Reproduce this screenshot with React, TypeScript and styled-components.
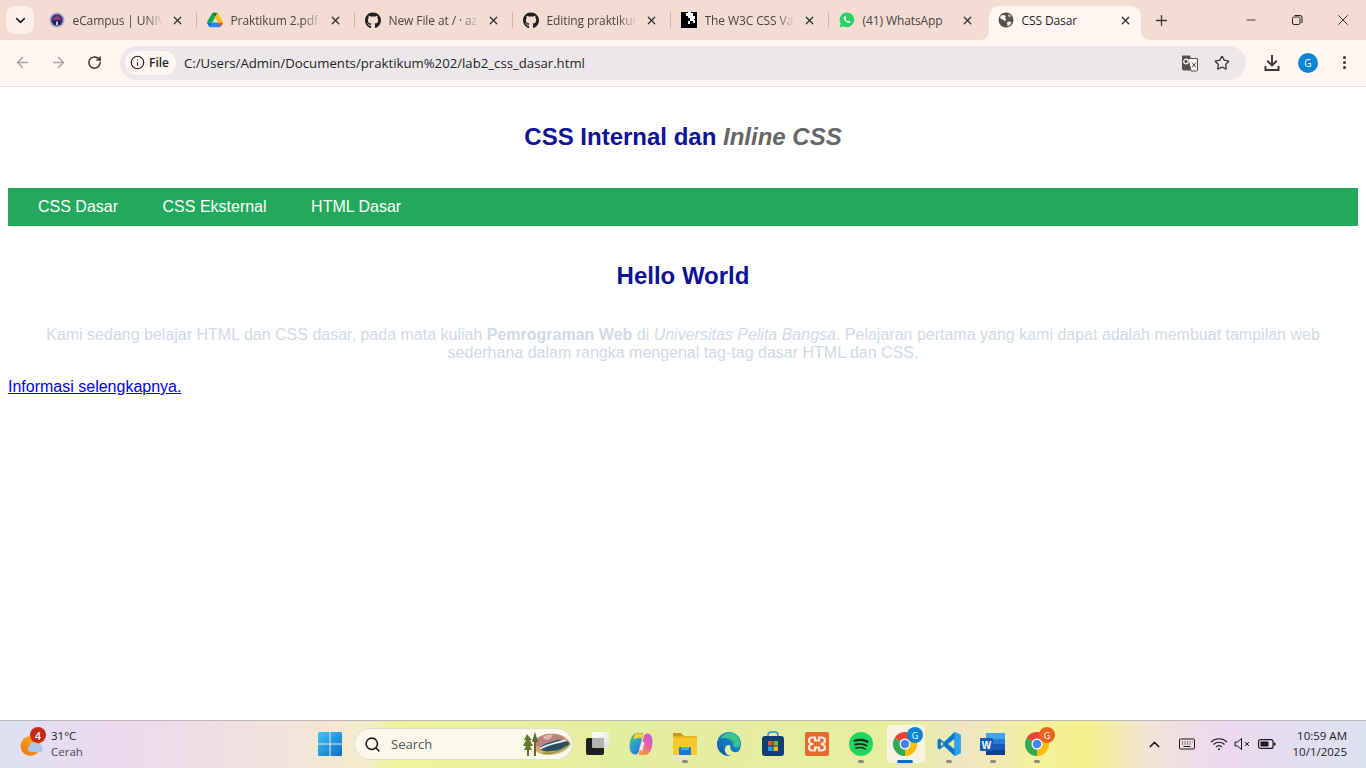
import React, { FC, ReactNode } from 'react';
import styled, { createGlobalStyle } from 'styled-components';
import { ArrowLeft, ArrowRight, RotateCw, Info, Star, EllipsisVertical, ChevronDown, ChevronUp, X, Plus, Minus, Search } from 'lucide-react';
import { FaGithub } from 'react-icons/fa';

const GlobalStyle = createGlobalStyle`
  html, body {
    margin: 0;
    padding: 0;
    width: 1366px;
    height: 768px;
    overflow: hidden;
    background: #fff;
  }
`;

const Screen = styled.div`
  width: 1366px;
  height: 768px;
  display: flex;
  flex-direction: column;
  font-family: 'Open Sans', 'Liberation Sans', sans-serif;
`;

/* browser tabs */
const TabStrip = styled.div`
  height: 40px;
  flex: none;
  display: flex;
  align-items: flex-start;
  background: #f3dcd2;
  padding-left: 6px;
  box-sizing: border-box;
`;

const TabListButton = styled.div`
  width: 28px;
  height: 28px;
  margin-top: 6px;
  margin-right: 5px;
  border-radius: 9px;
  background: #fdf0ea;
  color: #1f1f1f;
  display: flex;
  align-items: center;
  justify-content: center;
`;

const TabItem = styled.div<{ $active?: boolean }>`
  width: ${(p) => (p.$active ? '152px' : '158px')};
  height: ${(p) => (p.$active ? '34px' : '28px')};
  margin-top: 6px;
  margin-left: ${(p) => (p.$active ? '2px' : '0')};
  flex: none;
  box-sizing: border-box;
  padding: ${(p) => (p.$active ? '0 8px 6px 9px' : '0 12px 0 10px')};
  display: flex;
  align-items: center;
  position: relative;
  background: ${(p) => (p.$active ? '#fff6f2' : 'transparent')};
  border-radius: ${(p) => (p.$active ? '10px 10px 0 0' : '0')};
  color: ${(p) => (p.$active ? '#1f1f1f' : '#4a4441')};
`;

const TabFlare = styled.span<{ $side: 'left' | 'right' }>`
  position: absolute;
  bottom: 0;
  ${(p) => p.$side}: -8px;
  width: 8px;
  height: 8px;
  background: radial-gradient(
    circle at ${(p) => (p.$side === 'left' ? '0 0' : '100% 0')},
    transparent 7.5px,
    #fff6f2 8px
  );
`;

const TabDivider = styled.span`
  position: absolute;
  right: 0;
  top: 6px;
  width: 1px;
  height: 16px;
  background: #cdb8ae;
`;

const TabIcon = styled.span`
  width: 16px;
  height: 16px;
  flex: none;
  display: flex;
  align-items: center;
  justify-content: center;
  color: #1f1f1f;
`;

const TabTitle = styled.span<{ $fade?: boolean }>`
  flex: 1;
  min-width: 0;
  margin-left: 7.5px;
  font-size: 12px;
  letter-spacing: -0.1px;
  white-space: nowrap;
  -webkit-mask-image: ${(p) => (p.$fade ? 'linear-gradient(90deg, #000 72px, transparent 90px)' : 'none')};
`;

const TabClose = styled.span`
  width: 16px;
  height: 16px;
  flex: none;
  margin-left: 4px;
  display: flex;
  align-items: center;
  justify-content: center;
  color: #2b2b2b;
`;

const NewTab = styled.div`
  width: 20px;
  height: 28px;
  margin-top: 6px;
  margin-left: 10px;
  display: flex;
  align-items: center;
  justify-content: center;
  color: #3c3835;
`;

const WindowControls = styled.div`
  margin-left: auto;
  display: flex;
  height: 40px;
  align-items: center;
`;

const WindowButton = styled.div`
  width: 46px;
  height: 40px;
  display: flex;
  align-items: center;
  justify-content: center;
  color: #1f1f1f;
`;

/* toolbar */
const Toolbar = styled.div`
  height: 47px;
  flex: none;
  box-sizing: border-box;
  display: flex;
  align-items: center;
  background: #fff6f2;
  border-bottom: 1px solid #e6e0dd;
  padding-left: 4px;
  padding-bottom: 1px;
`;

const NavButton = styled.div<{ $dim?: boolean }>`
  width: 36px;
  height: 34px;
  display: flex;
  align-items: center;
  justify-content: center;
  color: ${(p) => (p.$dim ? '#a8a29f' : '#3c3836')};
`;

const Omnibox = styled.div`
  width: 1126px;
  height: 34px;
  margin-left: 8px;
  margin-right: 8px;
  border-radius: 17px;
  background: #ece7ea;
  display: flex;
  align-items: center;
  padding: 0 8px 0 5px;
  box-sizing: border-box;
`;

const SiteChip = styled.div`
  height: 24px;
  width: 51px;
  flex: none;
  border-radius: 12px;
  background: #fff6f2;
  display: flex;
  align-items: center;
  gap: 4px;
  padding-left: 5px;
  box-sizing: border-box;
  font-size: 12px;
  font-weight: 600;
  color: #1f1f1f;
`;

const UrlText = styled.div`
  margin-left: 8px;
  flex: 1;
  font-size: 13.2px;
  color: #1f1f1f;
`;

const OmniAction = styled.div`
  width: 32px;
  height: 32px;
  display: flex;
  align-items: center;
  justify-content: center;
  color: #3c3836;
`;

const Avatar = styled.div`
  width: 20px;
  height: 20px;
  border-radius: 50%;
  background: #0a85d1;
  color: #fff;
  font-size: 10px;
  display: flex;
  align-items: center;
  justify-content: center;
`;

/* page content */
const Viewport = styled.main`
  flex: 1;
  min-height: 0;
  background: #fff;
  box-sizing: border-box;
  padding: 0 8px;
  font-family: 'Liberation Sans', Arial, sans-serif;
  font-size: 16px;
`;

const PageTitle = styled.h1`
  margin: 0;
  padding: 36px 0 37px;
  text-align: center;
  font-size: 24px;
  line-height: 28px;
  font-weight: 700;
  color: #0e1296;
`;

const InlineNote = styled.i`
  color: #666;
`;

const NavBar = styled.nav`
  height: 38px;
  background: #23a95c;
  display: flex;
  align-items: center;
  gap: 44.5px;
  padding-left: 30px;
`;

const NavLink = styled.a`
  color: #fff;
  font-size: 16px;
  white-space: nowrap;
`;

const Heading = styled.h2`
  margin: 0;
  padding: 36px 0 36px;
  text-align: center;
  font-size: 24px;
  line-height: 28px;
  font-weight: 700;
  color: #0e1296;
`;

const Lead = styled.p`
  margin: 0;
  text-align: center;
  color: #d0dae6;
  font-size: 16px;
  line-height: 18px;
  padding: 0 30px;
`;

const MoreLink = styled.a`
  display: block;
  margin-top: 16px;
  width: max-content;
  color: #0000ee;
  text-decoration: underline;
  line-height: 18px;
`;

/* taskbar */
const Taskbar = styled.footer`
  height: 48px;
  flex: none;
  box-sizing: border-box;
  border-top: 1px solid #b9b7b5;
  padding-bottom: 1px;
  display: flex;
  align-items: center;
  background: linear-gradient(
    90deg,
    #dce2f2 0,
    #ecd9ef 110px,
    #f3e2dc 280px,
    #f4eccb 365px,
    #eff39c 395px,
    #e4eea0 620px,
    #e7eea0 900px,
    #efe6c2 965px,
    #f3f19a 1040px,
    #f5f08c 1085px,
    #f3e3d8 1150px,
    #ecd9ef 1225px,
    #dbe2f2 1366px
  );
`;

const WeatherArea = styled.div`
  width: 318px;
  flex: none;
  display: flex;
  align-items: center;
  padding-left: 20px;
  box-sizing: border-box;
`;

const WeatherIcon = styled.div`
  width: 26px;
  height: 34px;
  position: relative;
  flex: none;
`;

const WeatherBadge = styled.span`
  position: absolute;
  top: 0;
  left: 10px;
  width: 16px;
  height: 16px;
  border-radius: 50%;
  background: #c4291c;
  color: #fff;
  font-size: 11px;
  font-weight: 600;
  display: flex;
  align-items: center;
  justify-content: center;
`;

const WeatherText = styled.div`
  margin-left: 5px;
  font-size: 11.5px;
  line-height: 16px;
  color: #1f1f1f;
`;

const WeatherSub = styled.div`
  color: #4a4a4a;
`;

const StartSlot = styled.div`
  width: 22px;
  height: 24px;
  flex: none;
`;

const SearchBox = styled.div`
  width: 219px;
  height: 32px;
  flex: none;
  margin-left: 14px;
  box-sizing: border-box;
  border: 1px solid #dfe0c8;
  border-radius: 16px;
  background: #fbf9ec;
  display: flex;
  align-items: center;
  padding-left: 9px;
  position: relative;
  color: #1b1b1b;
`;

const SearchLabel = styled.span`
  margin-left: 10px;
  font-size: 13px;
  color: #555;
`;

const SearchArt = styled.span`
  position: absolute;
  right: 1px;
  top: 2px;
  width: 50px;
  height: 26px;
`;

const AppIcons = styled.div`
  display: flex;
  align-items: center;
  margin-left: 2px;
`;

const AppSlot = styled.div<{ $active?: boolean }>`
  width: 44px;
  height: 40px;
  flex: none;
  position: relative;
  display: flex;
  align-items: center;
  justify-content: center;
  &::before {
    content: '';
    position: absolute;
    left: 4px;
    right: 2px;
    top: 1px;
    bottom: 1px;
    border-radius: 4px;
    background: ${(p) => (p.$active ? '#f8f3e0' : 'transparent')};
  }
  & > * {
    position: relative;
  }
`;

const RunDot = styled.span<{ $active?: boolean }>`
  position: absolute !important;
  bottom: 1px;
  left: 50%;
  transform: translateX(-50%);
  width: ${(p) => (p.$active ? '16px' : '6px')};
  height: 3px;
  border-radius: 2px;
  background: ${(p) => (p.$active ? '#0a6fc4' : '#8a8a80')};
`;

const AppBadge = styled.span<{ $color: string }>`
  position: absolute !important;
  top: 3px;
  right: 4px;
  width: 16px;
  height: 16px;
  border-radius: 50%;
  background: ${(p) => p.$color};
  color: #fff;
  font-size: 9px;
  display: flex;
  align-items: center;
  justify-content: center;
`;

const Tray = styled.div`
  margin-left: auto;
  display: flex;
  align-items: center;
  padding-right: 19px;
  color: #1b1b1b;
`;

const TrayItem = styled.span<{ $w: number }>`
  width: ${(p) => p.$w}px;
  display: flex;
  align-items: center;
  justify-content: center;
`;

const Clock = styled.div`
  margin-left: 14px;
  font-size: 11.5px;
  line-height: 16px;
  text-align: right;
  color: #1b1b1b;
`;

/* drawn icons */
const CampusIcon = () => (
  <svg width="16" height="16" viewBox="0 0 16 16">
    <circle cx="8" cy="8" r="7.5" fill="#a9a6cc" />
    <circle cx="8" cy="8" r="5.8" fill="#2d2a80" />
    <path d="M3.5 7 8 3 12.5 7v1.5h-9z" fill="#8a3a68" />
    <rect x="4.5" y="8.5" width="7" height="4.5" fill="#1b1b55" />
    <rect x="7" y="9.5" width="2" height="3.5" fill="#c9c6e0" />
  </svg>
);

const DriveIcon = () => (
  <svg width="16" height="16" viewBox="0 0 87.3 78">
    <path d="m6.6 66.85 3.85 6.65c.8 1.4 1.95 2.5 3.3 3.3L27.5 53H0c0 1.55.4 3.1 1.2 4.5z" fill="#0066da" />
    <path d="M43.65 25 29.9 1.2c-1.35.8-2.5 1.9-3.3 3.3L1.2 48.5C.4 49.9 0 51.45 0 53h27.5z" fill="#00ac47" />
    <path d="M73.55 76.8c1.35-.8 2.5-1.9 3.3-3.3l1.6-2.75L86.1 57.5c.8-1.4 1.2-2.95 1.2-4.5H59.8l5.85 11.5z" fill="#ea4335" />
    <path d="M43.65 25 57.4 1.2C56.05.4 54.5 0 52.9 0H34.4c-1.6 0-3.15.45-4.5 1.2z" fill="#00832d" />
    <path d="M59.8 53H27.5L13.75 76.8c1.35.8 2.9 1.2 4.5 1.2h50.8c1.6 0 3.15-.45 4.5-1.2z" fill="#2684fc" />
    <path d="M73.4 26.5 60.7 4.5c-.8-1.4-1.95-2.5-3.3-3.3L43.65 25 59.8 53h27.45c0-1.55-.4-3.1-1.2-4.5z" fill="#ffba00" />
  </svg>
);

const ValidatorIcon = () => (
  <svg width="16" height="16" viewBox="0 0 16 16">
    <rect width="16" height="16" fill="#000" />
    <path d="M5 1h2V0h3v1h2v3h2v3h-1v1h1v3h-2V9H9v3H7V9h2V6H7V4H5z" fill="#fff" />
  </svg>
);

const GlobeIcon = () => (
  <svg width="16" height="16" viewBox="0 0 16 16">
    <circle cx="8" cy="8" r="7.5" fill="#55514f" />
    <path d="M3 3.5 6 3l2 1-1 2 1.5 1.5L7 9 4.5 7.5 2 6zM9 10l3-.5 1.5 1-2 3-2 .5zM10 2l3 2-2 1z" fill="#fff6f2" />
  </svg>
);

const WhatsAppIcon = () => (
  <svg width="16" height="16" viewBox="0 0 16 16">
    <path d="M8 .5a7.3 7.3 0 0 0-6.3 11L.6 15.400l4-1.100A7.3 7.3 0 1 0 8 .5z" fill="#25d366" />
    <path d="M5.5 4.200c-.5.3-1 1-.8 2 .3 1.700 2.800 4.500 5 4.800 1 .1 1.800-.5 2-1.200L10 8.700l-.9.8c-1-.3-2-1.500-2.500-2.500l.7-.9-.9-1.900z" fill="#fff" />
  </svg>
);

const RestoreIcon = () => (
  <svg width="12" height="12" viewBox="0 0 12 12" fill="none" stroke="currentColor">
    <rect x="1.5" y="3" width="7.5" height="7.5" rx="1.5" />
    <path d="M3.5 1.5h5.5a2 2 0 0 1 2 2v5.5" />
  </svg>
);

const TranslateIcon = () => (
  <svg width="18" height="18" viewBox="0 0 18 18">
    <path d="M1 1.5h8l1 3h-1l3 12H3a2 2 0 0 1-2-2z" fill="#55514f" />
    <path d="M7 4.5h9.500v11.500a1 1 0 0 1-1 1H10z" fill="#fff6f2" stroke="#55514f" />
    <circle cx="5" cy="7.5" r="2.3" fill="none" stroke="#fff" strokeWidth="1.2" />
    <path d="m11 8.5 4 5M15 8.5l-4 5" stroke="#55514f" />
  </svg>
);

const DownloadIcon = () => (
  <svg width="18" height="18" viewBox="0 0 18 18" fill="currentColor">
    <path d="M8 1h2v8l3-3 1.400 1.400L9 12.800 3.600 7.400 5 6l3 3z" />
    <path d="M1.500 12h2v3h11v-3h2v5h-15z" />
  </svg>
);

const WeatherArt = () => (
  <svg width="26" height="34" viewBox="0 0 26 34">
    <defs>
      <linearGradient id="sun" x1="0" y1="1" x2="1" y2="0">
        <stop offset="0" stopColor="#ea6f16" />
        <stop offset="1" stopColor="#fbb81f" />
      </linearGradient>
    </defs>
    <circle cx="10.5" cy="19" r="10" fill="url(#sun)" />
    <path d="M11 25a3 3 0 0 1-1.500-5.700 4.500 4.500 0 0 1 8.500-1.500 3.700 3.700 0 0 1 2 7.200z" fill="#a9c6ec" />
  </svg>
);

const WindowsLogo = () => (
  <svg width="24" height="24" viewBox="0 0 24 24">
    <defs>
      <linearGradient id="win" x1="0" y1="0" x2="1" y2="1">
        <stop offset="0" stopColor="#3ec6f3" />
        <stop offset="1" stopColor="#0a6cc9" />
      </linearGradient>
    </defs>
    <path d="M0 1.5A1.500 1.500 0 0 1 1.500 0h10v11.500H0zM12.500 0h10A1.500 1.500 0 0 1 24 1.500v10H12.500zM0 12.500h11.500V24h-10A1.500 1.500 0 0 1 0 22.500zM12.500 12.500H24v10a1.500 1.500 0 0 1-1.500 1.500h-10z" fill="url(#win)" />
  </svg>
);

const LandscapeArt = () => (
  <svg width="50" height="26" viewBox="0 0 50 26">
    <path d="M14 8c6-4 14-6 22-5 6 1 12 5 14 10-4 7-13 11-22 11-6 0-12-2-14-5z" fill="#d5b06c" />
    <path d="M14 10c5-6 12-8 18-7 7 0 13 4 17 9-6 1-12 3-18 4-6 0-12 0-17-1z" fill="#b9817f" />
    <path d="M22 6c3-2 7-3 10-2l-3 4-5 1z" fill="#e0b5b0" />
    <path d="M18 18c5-6 12-7 18-9 5-1 10 1 13 4-5 4-12 7-18 7-5 1-9 0-13-2z" fill="#2c4f5c" />
    <path d="M19 18c7-5 14-5 26-9" stroke="#e6eef0" strokeWidth="2" fill="none" />
    <path d="M22 22c8 1 17-2 24-7" stroke="#7d9a44" strokeWidth="1.500" fill="none" />
    <path d="M6 3 3 9h2l-3 6h3l-2 4h3v6h2v-6h3l-2-4h3L9 9h2z" fill="#5f7d2c" />
    <rect x="13" y="4" width="2" height="21" fill="#7a5a34" />
    <path d="M14 1 11 11h6z" fill="#4e6e28" />
  </svg>
);

const TaskViewIcon = () => (
  <svg width="24" height="24" viewBox="0 0 24 24">
    <defs>
      <linearGradient id="tv" x1="0" y1="0" x2="1" y2="1">
        <stop offset="0" stopColor="#ffffff" />
        <stop offset="1" stopColor="#e2e2da" />
      </linearGradient>
    </defs>
    <rect x="7" y="0" width="17" height="16" rx="2" fill="url(#tv)" />
    <rect x="1" y="6" width="18" height="17" rx="2" fill="#1f1f1f" />
    <rect x="7" y="6" width="12" height="10" rx="1" fill="#b4b4ae" />
  </svg>
);

const CopilotIcon = () => (
  <svg width="24" height="24" viewBox="0 0 24 24">
    <defs>
      <linearGradient id="copL" x1="0" y1="0" x2=".6" y2="1">
        <stop offset="0" stopColor="#6dc04a" />
        <stop offset=".5" stopColor="#2aa8c8" />
        <stop offset="1" stopColor="#2f6fe0" />
      </linearGradient>
      <linearGradient id="copR" x1="1" y1="0" x2=".4" y2="1">
        <stop offset="0" stopColor="#b45ae0" />
        <stop offset=".55" stopColor="#ea5fa8" />
        <stop offset="1" stopColor="#f59a3c" />
      </linearGradient>
    </defs>
    <path d="M8 1h5c1 0 1.500 1 1 2L9.500 20c-.5 1.600-1.500 2.500-3 2.500C3 22.500.5 19 .5 14.500.5 7.500 3.500 1 8 1z" fill="url(#copL)" />
    <path d="M16 23h-5c-1 0-1.500-1-1-2l5-17c.5-1.600 1.500-2.500 3-2.500 3.500 0 5.500 3.500 5.500 8 0 7-3 13.500-7.500 13.500z" fill="url(#copR)" />
    <path d="M7 1.500h6c.8 0 1.200.8 1 1.500l-1 3.500C10 5.500 6.500 6 5 8 4.500 5 5.500 2.500 7 1.500z" fill="#f2d23a" />
    <path d="M13 9.500 10.500 18l3 .5 2-8z" fill="#f3e6f6" />
  </svg>
);

const FolderIcon = () => (
  <svg width="26" height="24" viewBox="0 0 26 24">
    <path d="M1 2a1 1 0 0 1 1-1h7l3 3h-11z" fill="#c99a1e" />
    <path d="M1 5h24v18H1z" fill="#f8c92f" />
    <path d="M1 4h24v2H1z" fill="#e9b324" />
    <rect x="7" y="15" width="12" height="8" rx="1" fill="#1b78c9" />
    <rect x="9" y="15" width="8" height="3" fill="#49a7e8" />
  </svg>
);

const EdgeIcon = () => (
  <svg width="24" height="24" viewBox="0 0 24 24">
    <defs>
      <linearGradient id="edge" x1="0" y1="1" x2="1" y2="0">
        <stop offset="0" stopColor="#0c59a4" />
        <stop offset="1" stopColor="#1b9de2" />
      </linearGradient>
    </defs>
    <circle cx="12" cy="12" r="12" fill="url(#edge)" />
    <path d="M3 7a10.500 10.500 0 0 1 20 5c0 3-3 4-5 3-3 0-1-3-2-5-2-4-10-5-13-3z" fill="#3cc58a" />
    <path d="M15 24c-5 0-8-4-7-8 .5-2 2-3 4-3 3 0-1 5 5 7 2 .5 4 0 5-1-2 3-4 5-7 5z" fill="#e4eea0" />
  </svg>
);

const StoreIcon = () => (
  <svg width="24" height="26" viewBox="0 0 24 26">
    <path d="M7 6V4a3 3 0 0 1 3-3h4a3 3 0 0 1 3 3v2" fill="none" stroke="#2a8fd0" strokeWidth="1.500" />
    <rect x="1" y="5" width="22" height="20" rx="3" fill="#123f73" />
    <rect x="7" y="10" width="4.500" height="4.500" fill="#e8542e" />
    <rect x="12.500" y="10" width="4.500" height="4.500" fill="#7ab82d" />
    <rect x="7" y="15.500" width="4.500" height="4.500" fill="#1ea0e6" />
    <rect x="12.500" y="15.500" width="4.500" height="4.500" fill="#f6b818" />
  </svg>
);

const XamppIcon = () => (
  <svg width="24" height="24" viewBox="0 0 24 24">
    <rect width="24" height="24" rx="2" fill="#e8692c" />
    <path d="M10 5.500H7a3 3 0 0 0-1.500 5.600L7 12l-1.500.9A3 3 0 0 0 7 18.500h3v-3h4v3h3a3 3 0 0 0 1.500-5.600L17 12l1.500-.9A3 3 0 0 0 17 5.500h-3v3h-4z" fill="none" stroke="#fbe9dd" strokeWidth="2.200" />
  </svg>
);

const SpotifyIcon = () => (
  <svg width="24" height="24" viewBox="0 0 24 24" fill="none" stroke="#14291a" strokeLinecap="round">
    <circle cx="12" cy="12" r="12" fill="#1ed760" stroke="none" />
    <path d="M5.500 8.800c4.500-1.300 9.500-1 13 1" strokeWidth="2.200" />
    <path d="M6.200 12.500c3.800-1 8-.7 11.300 1" strokeWidth="1.900" />
    <path d="M7 16c3.200-.8 6.500-.5 9.200.9" strokeWidth="1.600" />
  </svg>
);

const ChromeIcon = () => (
  <svg width="24" height="24" viewBox="0 0 24 24">
    <path d="M12 12 22.400 6A12 12 0 0 0 1.600 6z" fill="#ea4335" />
    <path d="M12 12 1.600 6A12 12 0 0 0 12 24z" fill="#34a853" />
    <path d="M12 12 12 24A12 12 0 0 0 22.400 6z" fill="#fbbc05" />
    <circle cx="12" cy="12" r="5.500" fill="#fff" />
    <circle cx="12" cy="12" r="4.300" fill="#4285f4" />
  </svg>
);

const VsCodeIcon = () => (
  <svg width="24" height="24" viewBox="0 0 24 24">
    <path d="M17.500 0 23.500 2.800v18.400L17.500 24 7 14l-4.500 3.500L.5 16v-8L2.500 6.500 7 10z" fill="#0f76c4" />
    <path d="M17.500 6.800 11 12l6.500 5.200z" fill="#e4eea0" />
    <path d="M17.500 0 23.500 2.800v18.400L17.500 24z" fill="#2aa3ee" />
    <path d="M4 9.500 6.500 12 4 14.500z" fill="#e4eea0" />
  </svg>
);

const WordIcon = () => (
  <svg width="26" height="24" viewBox="0 0 26 24">
    <rect x="6" y="1" width="19" height="22" rx="1" fill="#2b7cd3" />
    <rect x="6" y="1" width="19" height="6" fill="#41a5ee" />
    <rect x="6" y="12" width="19" height="6" fill="#185abd" />
    <rect x="6" y="18" width="19" height="5" fill="#103f91" />
    <rect x="0" y="6" width="13" height="13" rx="1" fill="#1a5bb8" />
    <text x="6.500" y="16.500" fontSize="10" fontWeight="700" fill="#fff" textAnchor="middle" fontFamily="Liberation Sans">W</text>
  </svg>
);

const KeyboardIcon = () => (
  <svg width="16" height="12" viewBox="0 0 16 12" fill="none" stroke="currentColor">
    <rect x=".5" y="1" width="15" height="10" rx="1" />
    <path d="M3 4h1M5.500 4h1M8 4h1M10.500 4h1M13 4h.5M3 6h1M5.500 6h1M8 6h1M10.500 6h1M4.500 8.500h7" />
  </svg>
);

const WifiIcon = () => (
  <svg width="18" height="14" viewBox="0 0 18 14" fill="none" stroke="currentColor" strokeWidth="1.100">
    <path d="M1 5a11.500 11.500 0 0 1 16 0M3.500 7.500a8 8 0 0 1 11 0M6 10a4.500 4.500 0 0 1 6 0" />
    <circle cx="9" cy="12.300" r="1" fill="currentColor" stroke="none" />
  </svg>
);

const MuteIcon = () => (
  <svg width="18" height="14" viewBox="0 0 18 14" fill="none" stroke="currentColor">
    <path d="M1 5h2.500L7.500 1.500v11L3.500 9H1z" />
    <path d="m11 5 4 4M15 5l-4 4" />
  </svg>
);

const BatteryIcon = () => (
  <svg width="18" height="12" viewBox="0 0 18 12">
    <rect x=".6" y="1.600" width="14.400" height="8.800" rx="2" fill="none" stroke="currentColor" strokeWidth="1.200" />
    <rect x="2.500" y="3.500" width="8" height="5" rx=".8" fill="currentColor" />
    <rect x="15.800" y="4.500" width="1.700" height="3" rx=".6" fill="currentColor" />
  </svg>
);

interface TabData {
  title: string;
  icon: ReactNode;
  fade?: boolean;
}

const tabs: TabData[] = [
  { title: 'eCampus | UNIV', icon: <CampusIcon />, fade: true },
  { title: 'Praktikum 2.pdf', icon: <DriveIcon />, fade: true },
  { title: 'New File at / · az', icon: <FaGithub size={17} />, fade: true },
  { title: 'Editing praktikur', icon: <FaGithub size={17} />, fade: true },
  { title: 'The W3C CSS Va', icon: <ValidatorIcon />, fade: true },
  { title: '(41) WhatsApp', icon: <WhatsAppIcon /> },
];

const Tab: FC<TabData & { active?: boolean; divider?: boolean }> = ({ title, icon, fade, active, divider }) => (
  <TabItem $active={active}>
    <TabIcon>{icon}</TabIcon>
    <TabTitle $fade={fade}>{title}</TabTitle>
    <TabClose>
      <X size={13} strokeWidth={2.2} />
    </TabClose>
    {divider && <TabDivider />}
    {active && <TabFlare $side="left" />}
    {active && <TabFlare $side="right" />}
  </TabItem>
);

const App: FC = () => {
  return (
    <Screen>
      <GlobalStyle />
      <TabStrip>
        <TabListButton>
          <ChevronDown size={15} strokeWidth={2.6} />
        </TabListButton>
        {tabs.map((t, i) => (
          <Tab key={t.title} {...t} divider={i < tabs.length - 1} />
        ))}
        <Tab title="CSS Dasar" icon={<GlobeIcon />} active />
        <NewTab>
          <Plus size={17} strokeWidth={1.8} />
        </NewTab>
        <WindowControls>
          <WindowButton>
            <Minus size={14} strokeWidth={1.4} />
          </WindowButton>
          <WindowButton>
            <RestoreIcon />
          </WindowButton>
          <WindowButton>
            <X size={18} strokeWidth={1.2} />
          </WindowButton>
        </WindowControls>
      </TabStrip>

      <Toolbar>
        <NavButton $dim>
          <ArrowLeft size={17} />
        </NavButton>
        <NavButton $dim>
          <ArrowRight size={17} />
        </NavButton>
        <NavButton>
          <RotateCw size={15} strokeWidth={2.4} />
        </NavButton>
        <Omnibox>
          <SiteChip>
            <Info size={15} strokeWidth={1.8} />
            File
          </SiteChip>
          <UrlText>C:/Users/Admin/Documents/praktikum%202/lab2_css_dasar.html</UrlText>
          <OmniAction>
            <TranslateIcon />
          </OmniAction>
          <OmniAction>
            <Star size={16} strokeWidth={2} />
          </OmniAction>
        </Omnibox>
        <NavButton>
          <DownloadIcon />
        </NavButton>
        <NavButton>
          <Avatar>G</Avatar>
        </NavButton>
        <NavButton>
          <EllipsisVertical size={17} strokeWidth={2.4} />
        </NavButton>
      </Toolbar>

      <Viewport>
        <PageTitle>
          CSS Internal dan <InlineNote>Inline CSS</InlineNote>
        </PageTitle>
        <NavBar>
          <NavLink>CSS Dasar</NavLink>
          <NavLink>CSS Eksternal</NavLink>
          <NavLink>HTML Dasar</NavLink>
        </NavBar>
        <Heading>Hello World</Heading>
        <Lead>
          Kami sedang belajar HTML dan CSS dasar, pada mata kuliah <b>Pemrograman Web</b> di{' '}
          <i>Universitas Pelita Bangsa</i>. Pelajaran pertama yang kami dapat adalah membuat tampilan web sederhana
          dalam rangka mengenal tag-tag dasar HTML dan CSS.
        </Lead>
        <MoreLink>Informasi selengkapnya.</MoreLink>
      </Viewport>

      <Taskbar>
        <WeatherArea>
          <WeatherIcon>
            <WeatherArt />
            <WeatherBadge>4</WeatherBadge>
          </WeatherIcon>
          <WeatherText>
            31°C
            <WeatherSub>Cerah</WeatherSub>
          </WeatherText>
        </WeatherArea>
        <StartSlot>
          <WindowsLogo />
        </StartSlot>
        <SearchBox>
          <Search size={17} strokeWidth={2.2} />
          <SearchLabel>Search</SearchLabel>
          <SearchArt>
            <LandscapeArt />
          </SearchArt>
        </SearchBox>
        <AppIcons>
          <AppSlot><TaskViewIcon /></AppSlot>
          <AppSlot><CopilotIcon /></AppSlot>
          <AppSlot><FolderIcon /><RunDot /></AppSlot>
          <AppSlot><EdgeIcon /></AppSlot>
          <AppSlot><StoreIcon /></AppSlot>
          <AppSlot><XamppIcon /></AppSlot>
          <AppSlot><SpotifyIcon /><RunDot /></AppSlot>
          <AppSlot $active><ChromeIcon /><AppBadge $color="#0a85d1">G</AppBadge><RunDot $active /></AppSlot>
          <AppSlot><VsCodeIcon /><RunDot /></AppSlot>
          <AppSlot><WordIcon /><RunDot /></AppSlot>
          <AppSlot><ChromeIcon /><AppBadge $color="#e8641c">G</AppBadge><RunDot /></AppSlot>
        </AppIcons>
        <Tray>
          <TrayItem $w={24}><ChevronUp size={17} strokeWidth={2} /></TrayItem>
          <TrayItem $w={40}><KeyboardIcon /></TrayItem>
          <TrayItem $w={24}><WifiIcon /></TrayItem>
          <TrayItem $w={24}><MuteIcon /></TrayItem>
          <TrayItem $w={24}><BatteryIcon /></TrayItem>
          <Clock>
            10:59 AM
            <br />
            10/1/2025
          </Clock>
        </Tray>
      </Taskbar>
    </Screen>
  );
};

export default App;
